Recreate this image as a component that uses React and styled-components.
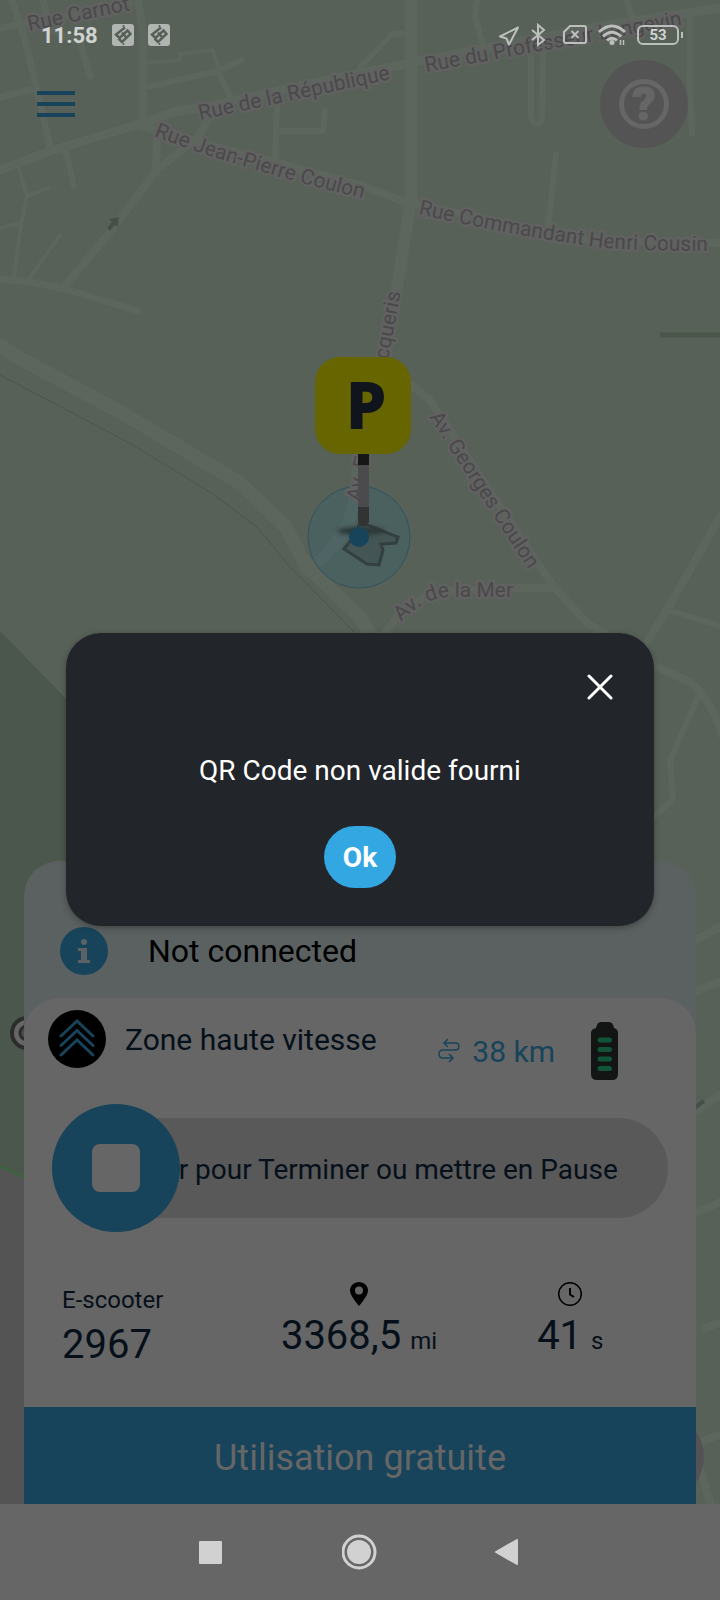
import React, { useState } from "react";
import styled, { createGlobalStyle } from "styled-components";

const App = () => {
  const [open, setOpen] = useState(true);
  const [slide, setSlide] = useState(0);

  return (
    <Screen>
      <GlobalStyle />
      <CityMap />
      <StatusBar />
      <Toolbar>
        <MenuButton aria-label="Menu">
          <MenuLine />
          <MenuLine />
          <MenuLine />
        </MenuButton>
        <HelpButton aria-label="Aide">
          <HelpRing>?</HelpRing>
        </HelpButton>
      </Toolbar>

      <Sheet>
        <Notice>
          <InfoIcon />
          <NoticeText>Not connected</NoticeText>
        </Notice>
        <Card>
          <RideRow>
            <Zone>
              <ZoneIcon />
              <span>Zone haute vitesse</span>
            </Zone>
            <Range>
              <RouteIcon />
              <RangeText>38 km</RangeText>
              <BatteryIcon />
            </Range>
          </RideRow>
          <SlideBox>
            <SlideLabel htmlFor="slide">
              Glisser pour Terminer ou mettre en Pause
            </SlideLabel>
            <SlideInput
              id="slide"
              type="range"
              min="0"
              max="100"
              value={slide}
              onChange={(e) => setSlide(Number(e.target.value))}
            />
          </SlideBox>
          <Stats>
            <Scooter>
              <Small>E-scooter</Small>
              <Big>2967</Big>
            </Scooter>
            <Stat>
              <PlaceIcon />
              <Value>
                <Big>3368,5</Big>
                <Small>mi</Small>
              </Value>
            </Stat>
            <Stat>
              <ClockIcon />
              <Value>
                <Big>41</Big>
                <Small>s</Small>
              </Value>
            </Stat>
          </Stats>
        </Card>
        <FreeBar>Utilisation gratuite</FreeBar>
      </Sheet>

      <NavBar>
        <NavButton aria-label="Applications">
          <svg width="36" height="36" viewBox="0 0 36 36">
            <rect x="7" y="7" width="23" height="23" rx="1" fill="#d1d1d1" />
          </svg>
        </NavButton>
        <NavButton aria-label="Accueil">
          <svg width="36" height="36" viewBox="0 0 36 36">
            <circle cx="17" cy="18" r="16" fill="none" stroke="#d1d1d1" strokeWidth="3" />
            <circle cx="17" cy="18" r="12" fill="#d1d1d1" />
          </svg>
        </NavButton>
        <NavButton aria-label="Retour">
          <svg width="36" height="36" viewBox="0 0 36 36">
            <path d="M4 18L25 6V30Z" fill="#d1d1d1" stroke="#d1d1d1" strokeWidth="2" strokeLinejoin="round" />
          </svg>
        </NavButton>
      </NavBar>

      {open && (
        <Overlay>
          <Dialog role="alertdialog" aria-labelledby="message">
            <CloseButton aria-label="Fermer" onClick={() => setOpen(false)}>
              <svg width="26" height="26" viewBox="0 0 26 26">
                <path d="M2 2L24 24M24 2L2 24" stroke="#fff" strokeWidth="3" strokeLinecap="round" />
              </svg>
            </CloseButton>
            <Message id="message">QR Code non valide fourni</Message>
            <OkButton onClick={() => setOpen(false)}>Ok</OkButton>
          </Dialog>
        </Overlay>
      )}
    </Screen>
  );
};

const StatusBar = () => (
  <Status>
    <StatusGroup>
      <Time>11:58</Time>
      <AppBadge />
      <AppBadge />
    </StatusGroup>
    <StatusIcons>
      <svg width="20" height="22" viewBox="0 0 20 22">
        <path d="M1 12.500L19 3.500L10 20.500L7.500 14.500Z" fill="none" stroke="#bcc0bd" strokeWidth="2" strokeLinejoin="round" />
      </svg>
      <svg width="22" height="24" viewBox="0 0 22 24">
        <path d="M2 7L14 17L8 22V2L14 7L2 17" fill="none" stroke="#bcc0bd" strokeWidth="2" />
      </svg>
      <svg width="24" height="22" viewBox="0 0 24 22">
        <path d="M7 2H21Q23 2 23 4V17Q23 19 21 19H3Q1 19 1 17V8Z" fill="none" stroke="#bcc0bd" strokeWidth="2" />
        <path d="M8.500 7L15.500 14M15.500 7L8.500 14" stroke="#bcc0bd" strokeWidth="2" />
      </svg>
      <svg width="28" height="22" viewBox="0 0 28 22">
        <g fill="none" stroke="#bcc0bd" strokeWidth="3">
          <path d="M1 8Q14 -4 27 8" />
          <path d="M5 12.500Q14 4 23 12.500" />
          <path d="M9 16.500Q14 12 19 16.500" />
        </g>
        <circle cx="14" cy="18.500" r="2.500" fill="#bcc0bd" />
        <path d="M22.500 16V21M25.500 16V21" stroke="#bcc0bd" strokeWidth="1.500" />
      </svg>
      <Battery>
        <BatteryLevel>53</BatteryLevel>
        <BatteryTip />
      </Battery>
    </StatusIcons>
  </Status>
);

const AppBadge = () => (
  <svg width="22" height="22" viewBox="0 0 22 22">
    <rect width="22" height="22" rx="3" fill="#b1b5b2" />
    <g fill="none" stroke="#566057" strokeWidth="2.500">
      <path d="M13 3.500L4 10.500L7.500 14L15.500 6.500L18.500 10L10 18L6.500 14.500" />
      <path d="M10 8.500L14 13" />
    </g>
    <path d="M11.500 1V3M11.500 19V21" stroke="#566057" strokeWidth="1.500" />
  </svg>
);

const InfoIcon = () => (
  <svg width="48" height="48" viewBox="0 0 48 48">
    <circle cx="24" cy="24" r="24" fill="#17445b" />
    <circle cx="24" cy="15" r="3" fill="#5c6263" />
    <path d="M18 21H27V33H30V36H18V33H21V24H18Z" fill="#5c6263" />
  </svg>
);

const ZoneIcon = () => (
  <svg width="58" height="58" viewBox="0 0 58 58">
    <circle cx="29" cy="29" r="29" fill="#000" />
    <path
      d="M13 26L29 11L45 26M13 35.500L29 20.500L45 35.500M13 45L29 30L45 45"
      fill="none"
      stroke="#17445b"
      strokeWidth="3"
      strokeLinecap="round"
    />
  </svg>
);

const RouteIcon = () => (
  <svg width="22" height="26" viewBox="0 0 22 26">
    <path
      d="M10 1L6 5L10 9M6 5H17Q21 5 21 8.500Q21 12 17 12H5Q1 12 1 16Q1 20 5 20H15M11 16L15 20L11 24"
      fill="none"
      stroke="#17445b"
      strokeWidth="1.500"
    />
  </svg>
);

const BatteryIcon = () => (
  <svg width="27" height="58" viewBox="0 0 27 58">
    <path d="M5 6Q6 0 10 0H18Q22 0 23 6Q27 7 27 11V52Q27 58 21 58H6Q0 58 0 52V11Q0 7 5 6Z" fill="#131414" />
    <path d="M9 18H18.500M9 27.500H18.500M9 37H18.500M9 46.500H18.500" stroke="#125438" strokeWidth="5" strokeLinecap="round" />
  </svg>
);

const PlaceIcon = () => (
  <svg width="24" height="24" viewBox="0 0 24 24">
    <path d="M12 0C7 0 3 4 3 8.500C3 14 12 24 12 24S21 14 21 8.500C21 4 17 0 12 0Z" fill="#000" />
    <circle cx="12" cy="8.500" r="4" fill="#666" />
  </svg>
);

const ClockIcon = () => (
  <svg width="24" height="24" viewBox="0 0 24 24" fill="none" stroke="#000">
    <circle cx="12" cy="12" r="11.300" strokeWidth="1.500" />
    <path d="M12 6V12.500L16 15" strokeWidth="2" />
  </svg>
);

const roads = [
  { w: 7, d: "M12 0L25 40L51 150M0 28L45 20L130 3M43 0L50 30L80 42L90 76M0 97L30 90" },
  { w: 8, d: "M138 0L143 33V127" },
  { w: 4, d: "M146 63L180 60V54L213 50L219 70" },
  { w: 6, d: "M143 88L218 71L242 60M218 71L233 103" },
  { w: 9, d: "M0 170L50 151L140 124L173 112L210 106L360 73L425 60L600 26L720 8" },
  { w: 8, d: "M143 125L157 131L360 185L405 202L425 206L550 233L600 242L720 243" },
  { w: 8, d: "M208 120L198 137L157 170L110 232L65 286M157 133L156 172" },
  { w: 7, d: "M0 279L30 282L65 289L138 311" },
  { w: 4, d: "M18 165L27 196L21 224L14 277M27 196L49 188M0 228L21 223M60 235L29 279" },
  { w: 6, d: "M66 152L74 186M277 105L275 157M279 131H323L325 110" },
  { w: 12, d: "M411 0V200L395 300L380 385L362 440L354 500Q350 535 315 565" },
  { w: 6, d: "M477 0L475 17L484 48M627 0L633 22M690 17V90L692 134M360 67L392 34L411 33" },
  { w: 6, d: "M531 55V115Q532 124 537 124Q542 124 542 115L543 50M556 154L548 227" },
  { w: 8, d: "M380 375L411 385L430 400L537 563L557 590L587 623L607 635L657 667L690 682Q712 700 722 735" },
  { w: 8, d: "M383 635L397 617L430 593L503 588H552M720 517L667 610L645 645" },
  { w: 14, d: "M0 345L17 357L117 410L240 483L285 526L307 567L360 617L380 650" },
  { w: 6, d: "M667 610L720 626M698 697L670 760L673 800L653 817" },
  { w: 8, d: "M690 943L720 927M690 993L720 982M690 1115L720 1095M690 1216L720 1202M705 1328L720 1323M690 1445L720 1435M695 1450L712 1510" },
];

const labels = [
  { id: "carnot", d: "M29 31L150 6", text: "Rue Carnot" },
  { id: "republique", d: "M200 120L420 73", text: "Rue de la République" },
  { id: "coulon", d: "M154 136Q250 173 400 207", text: "Rue Jean-Pierre Coulon" },
  { id: "langevin", d: "M426 72L720 18", text: "Rue du Professeur Langevin" },
  { id: "cousin", d: "M418 214Q500 233 583 245Q610 251 720 251", text: "Rue Commandant Henri Cousin" },
  { id: "georges", d: "M429 417L556 612", text: "Av. Georges Coulon" },
  { id: "mer", d: "M401 622Q425 597 450 597H540", text: "Av. de la Mer" },
  { id: "av", d: "M360 502L378 420", text: "Av. E" },
  { id: "jacqueris", d: "M388 360L405 270", text: "cqueris" },
];

const CityMap = () => (
  <MapSvg viewBox="0 0 720 1600" preserveAspectRatio="xMidYMin slice">
    <rect width="720" height="1600" fill="#576157" />
    <path d="M0 631L230 867V1300H0Z" fill="#4b564c" />
    <path d="M0 1166L60 1194V1504H0Z" fill="#545454" />
    <path d="M0 1166L60 1194" stroke="#3f6340" strokeWidth="3" />
    <g fill="none" stroke="#5c665d" strokeLinecap="round" strokeLinejoin="round">
      {roads.map((road) => (
        <path key={road.d} d={road.d} strokeWidth={road.w} />
      ))}
    </g>
    <path d="M0 375L67 410L133 445L213 494L257 527L290 567L355 633" fill="none" stroke="#4b564c" />
    <path d="M660 335H720" stroke="#4b564b" strokeWidth="5" />
    <path d="M107 228L112 222L109 219L119 217L118 227L115 225L110 231Z" fill="#465048" />
    <path d="M690 1111L704 1101" stroke="#465048" strokeWidth="4" />
    <circle cx="27" cy="1033" r="15" fill="#666" stroke="#2b2d2b" strokeWidth="4" />
    <circle cx="27" cy="1033" r="7" fill="#4b4b4b" stroke="#2b2d2b" strokeWidth="3" />
    <circle cx="660" cy="1457" r="44" fill="#545254" />
    <circle cx="359" cy="537" r="51" fill="#1f6285" fillOpacity="0.200" stroke="#30535e" />
    {labels.map((label) => (
      <React.Fragment key={label.id}>
        <path id={label.id} d={label.d} fill="none" />
        <MapLabel>
          <textPath href={`#${label.id}`}>{label.text}</textPath>
        </MapLabel>
      </React.Fragment>
    ))}
    <path
      d="M360 522L398 537L396 543L381 544L383 550L379 565L367 564L344 549L356 534Z"
      fill="#3d4a4b"
      fillOpacity="0.500"
      stroke="#33403f"
      strokeWidth="3"
    />
    <PinShadow cx="361" cy="531" rx="24" ry="4" />
    <path d="M358 454H369V466H358Z" fill="#151615" />
    <path d="M358 465H369V508H358Z" fill="#4b4b4d" />
    <path d="M358 507H369V522Q363 531 358 522Z" fill="#323433" />
    <circle cx="359" cy="537" r="10" fill="#17445b" />
    <rect x="315" y="357" width="96" height="97" rx="25" fill="#666500" />
    <Parking x="366" y="428">P</Parking>
  </MapSvg>
);

const GlobalStyle = createGlobalStyle`
  body {
    margin: 0;
    background: #666;
    font-family: Roboto, "Liberation Sans", sans-serif;
  }

  button {
    border: 0;
    padding: 0;
    background: none;
    font-family: inherit;
    cursor: pointer;
  }

  svg {
    display: block;
    flex-shrink: 0;
  }
`;

const Screen = styled.div`
  position: relative;
  display: flex;
  flex-direction: column;
  min-height: 100vh;
  overflow: hidden;
  isolation: isolate;
`;

/* the map lies under the whole page */
const MapSvg = styled.svg`
  position: absolute;
  inset: 0;
  z-index: -1;
  width: 100%;
  height: 100%;
`;

const MapLabel = styled.text`
  fill: #4a494a;
  stroke: #616161;
  stroke-width: 5px;
  stroke-linejoin: round;
  paint-order: stroke;
  font-size: 21px;
`;

const PinShadow = styled.ellipse`
  fill: #2c3636;
  filter: blur(2px);
`;

const Parking = styled.text`
  fill: #10151d;
  stroke: #10151d;
  stroke-width: 2px;
  font-family: "Noto Sans", sans-serif;
  font-size: 63px;
  font-weight: 700;
  text-anchor: middle;
`;

const Status = styled.header`
  display: flex;
  justify-content: space-between;
  align-items: center;
  height: 50px;
  padding: 10px 37px 0 41px;
`;

const StatusGroup = styled.div`
  display: flex;
  align-items: center;
  gap: 14px;
`;

const StatusIcons = styled(StatusGroup)`
  gap: 11px;
`;

const Time = styled.span`
  color: #d0d3d1;
  font-size: 22px;
  font-weight: 700;
`;

const Battery = styled.div`
  display: flex;
  align-items: center;
  gap: 2px;
`;

const BatteryLevel = styled.span`
  box-sizing: border-box;
  width: 42px;
  height: 20px;
  border: 2px solid #bcc0bd;
  border-radius: 6px;
  color: #d0d3d1;
  font-size: 15px;
  font-weight: 700;
  line-height: 16px;
  text-align: center;
`;

const BatteryTip = styled.span`
  width: 2px;
  height: 6px;
  background: #bcc0bd;
`;

const Toolbar = styled.div`
  display: flex;
  justify-content: space-between;
  align-items: center;
  padding: 0 32px 0 37px;
`;

const MenuButton = styled.button`
  display: grid;
  gap: 7px;
  width: 38px;
`;

const MenuLine = styled.span`
  height: 4px;
  background: #17445b;
`;

const HelpButton = styled.button`
  display: grid;
  place-items: center;
  width: 88px;
  height: 88px;
  border-radius: 50%;
  background: #545454;
`;

const HelpRing = styled.span`
  box-sizing: border-box;
  width: 50px;
  height: 50px;
  border: 5px solid #666;
  border-radius: 50%;
  color: #666;
  font-size: 46px;
  font-weight: 900;
  line-height: 40px;
  -webkit-text-stroke: 1px #666;
`;

const Sheet = styled.main`
  margin: auto 24px 0;
  border-radius: 35px 35px 0 0;
  background: #5b6161;
`;

const Notice = styled.div`
  display: flex;
  align-items: center;
  gap: 40px;
  padding: 66px 36px 23px;
`;

const NoticeText = styled.span`
  color: #000;
  font-size: 32px;
`;

const Card = styled.section`
  border-radius: 35px 35px 0 0;
  background: #666;
  color: #06101a;
`;

const RideRow = styled.div`
  display: flex;
  justify-content: space-between;
  padding: 12px 78px 0 24px;
`;

const Zone = styled.div`
  display: flex;
  align-items: center;
  gap: 19px;
  height: 58px;
  font-size: 30px;
`;

const Range = styled.div`
  display: flex;
  align-items: center;
  padding-top: 12px;
`;

const RangeText = styled.span`
  margin: 0 36px 0 12px;
  color: #17445b;
  font-size: 30px;
`;

/* label and input share one cell, so the thumb slides over the text */
const SlideBox = styled.div`
  display: grid;
  align-items: center;
  padding: 24px 28px 0;
`;

const SlideLabel = styled.label`
  grid-area: 1 / 1;
  padding-top: 4px;
  border-radius: 50px;
  background: #595959;
  font-size: 28px;
  line-height: 96px;
  text-align: center;
  white-space: nowrap;
`;

const SlideInput = styled.input`
  grid-area: 1 / 1;
  width: 100%;
  height: 128px;
  margin: 0;
  background: none;
  appearance: none;

  &::-webkit-slider-thumb {
    width: 128px;
    height: 128px;
    border-radius: 50%;
    background: #17445b
      url("data:image/svg+xml,%3Csvg xmlns='http://www.w3.org/2000/svg' width='48' height='48'%3E%3Crect width='48' height='48' rx='8' fill='%23666'/%3E%3C/svg%3E")
      center no-repeat;
    appearance: none;
  }
`;

const Stats = styled.div`
  display: grid;
  grid-template-columns: repeat(3, 1fr);
  padding: 50px 20px 40px 18px;
`;

const Scooter = styled.div`
  display: grid;
  gap: 9px;
  padding: 4px 20px 0;
`;

const Stat = styled.div`
  display: flex;
  flex-direction: column;
  align-items: center;
  gap: 8px;
`;

const Value = styled.div`
  display: flex;
  align-items: baseline;
  gap: 9px;
`;

const Small = styled.span`
  font-size: 24px;
  line-height: 28px;
`;

const Big = styled.span`
  font-size: 40px;
  line-height: 44px;
`;

const FreeBar = styled.div`
  padding-top: 5px;
  background: #17445b;
  color: #666;
  font-size: 36px;
  line-height: 92px;
  text-align: center;
`;

const NavBar = styled.nav`
  display: flex;
  justify-content: center;
  gap: 54px;
  height: 96px;
  background: #666;
`;

const NavButton = styled.button`
  display: grid;
  place-items: center;
  width: 96px;
`;

/* centred between the status bar and the navigation bar */
const Overlay = styled.div`
  position: absolute;
  inset: 55px 66px 96px;
  display: grid;
  align-items: center;
`;

const Dialog = styled.div`
  display: flex;
  flex-direction: column;
  align-items: center;
  padding: 30px 30px 38px;
  border-radius: 35px;
  background: #222529;
  box-shadow: 0 2px 6px rgba(0, 0, 0, 0.3);
`;

const CloseButton = styled.button`
  display: grid;
  place-items: center;
  align-self: flex-end;
  width: 48px;
  height: 48px;
`;

const Message = styled.p`
  margin: 42px 0 37px;
  color: #fff;
  font-size: 28px;
  line-height: 36px;
`;

const OkButton = styled.button`
  width: 72px;
  height: 62px;
  border-radius: 31px;
  background: #33a7e2;
  color: #fff;
  font-size: 28px;
  font-weight: 700;
`;

export default App;
